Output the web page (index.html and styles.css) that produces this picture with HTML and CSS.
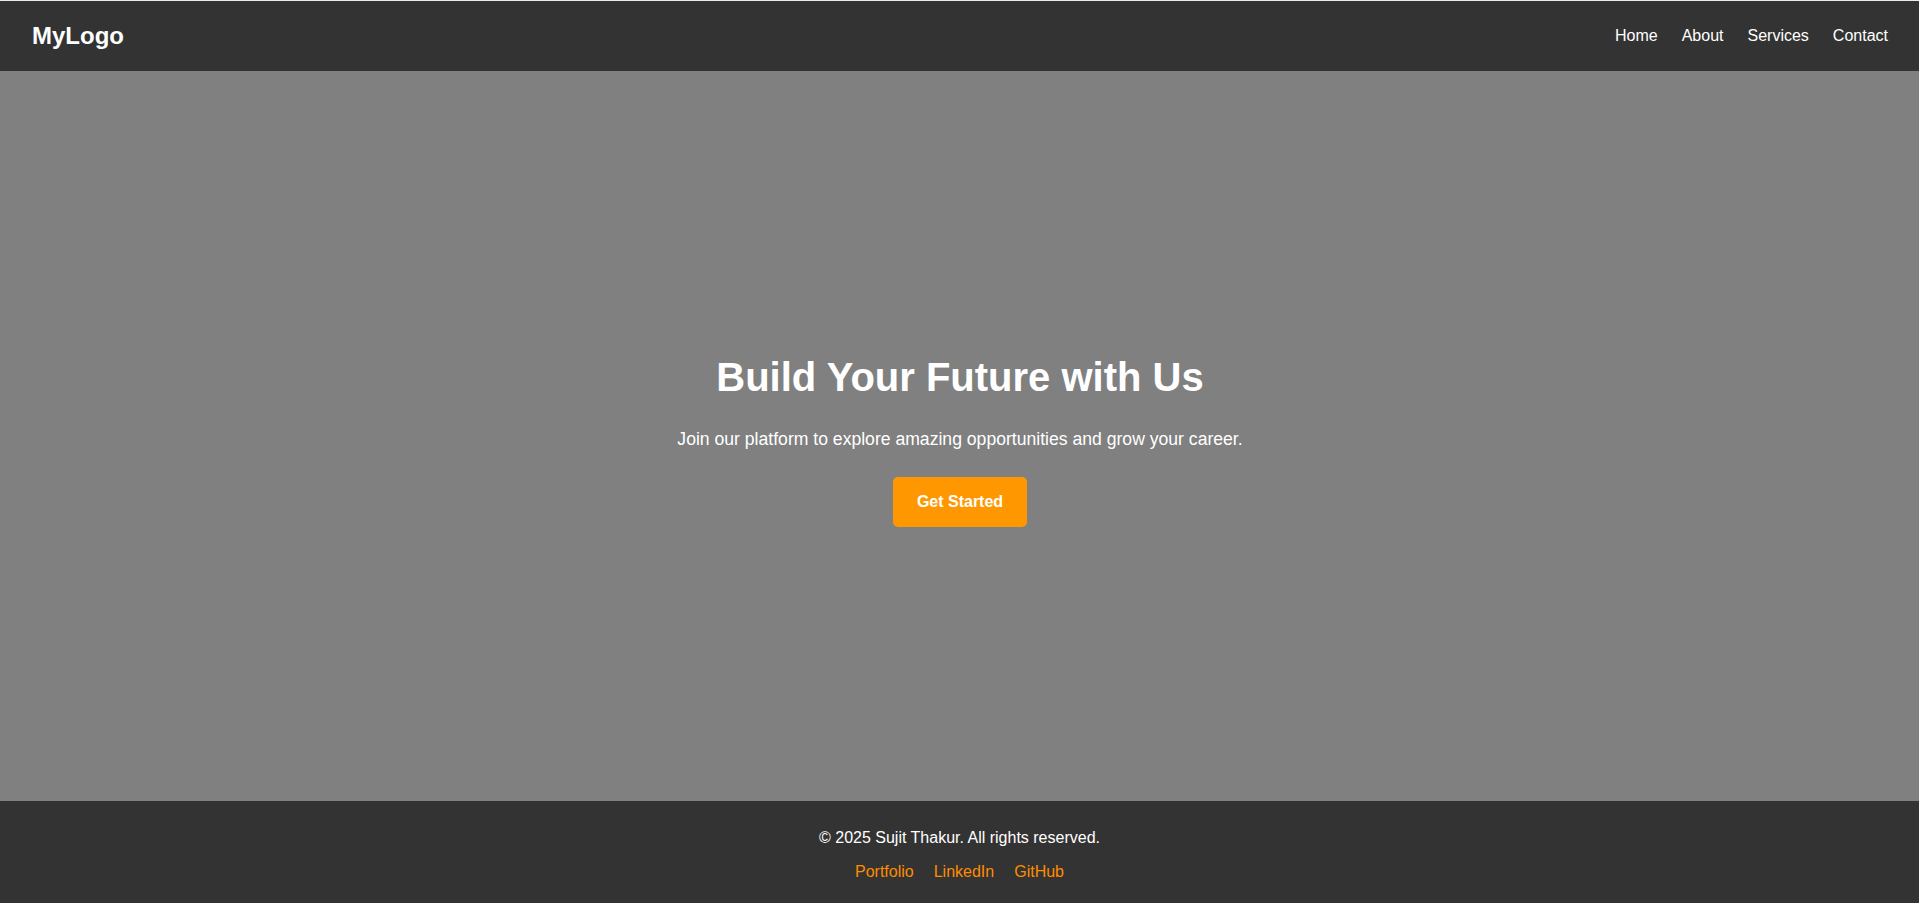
FILE: index.html
```html
<!DOCTYPE html>
<html lang="en">
<head>
<meta charset="utf-8">
<title>MyLogo</title>
<link rel="stylesheet" href="styles.css">
</head>
<body>
<div class="page">
  <header class="site-header">
    <div class="logo">MyLogo</div>
    <nav class="nav">
      <a href="#">Home</a>
      <a href="#">About</a>
      <a href="#">Services</a>
      <a href="#">Contact</a>
    </nav>
  </header>
  <main class="hero">
    <h1 class="hero-title">Build Your Future with Us</h1>
    <p class="hero-text">Join our platform to explore amazing opportunities and grow your career.</p>
    <a class="btn" href="#">Get Started</a>
  </main>
  <footer class="site-footer">
    <p class="copy">© 2025 Sujit Thakur. All rights reserved.</p>
    <div class="footer-links">
      <a href="#">Portfolio</a>
      <a href="#">LinkedIn</a>
      <a href="#">GitHub</a>
    </div>
  </footer>
</div>
</body>
</html>
```

FILE: styles.css
```css
* { box-sizing: border-box; }
html, body { margin: 0; padding: 0; }
body {
  font-family: "Liberation Sans", Arial, sans-serif;
  color: #fff;
  background: #808080;
}
.page {
  height: 903px;
  display: flex;
  flex-direction: column;
  border-top: 1px solid #ebebeb;
}
.site-header {
  height: 70px;
  flex: 0 0 70px;
  background: #333;
  display: flex;
  align-items: center;
  justify-content: space-between;
  padding: 0 31px 0 32px;
}
.logo {
  font-size: 24px;
  font-weight: bold;
  color: #fff;
}
.nav {
  display: flex;
  gap: 24px;
}
.nav a {
  color: #fff;
  text-decoration: none;
  font-size: 16px;
}
.hero {
  flex: 1;
  background: #808080;
  display: flex;
  flex-direction: column;
  align-items: center;
  justify-content: center;
  padding-top: 9px;
  padding-left: 1px;
  text-align: center;
}
.hero-title {
  font-size: 40px;
  font-weight: bold;
  margin: 0 0 29px;
  line-height: 46px;
}
.hero-text {
  font-size: 17.6px;
  margin: 0 0 28px;
  line-height: 20px;
}
.btn {
  display: inline-block;
  background: #ff9800;
  color: #fff;
  font-weight: bold;
  font-size: 16px;
  line-height: 18px;
  padding: 16px 24px;
  border-radius: 5px;
  text-decoration: none;
}
.site-footer {
  flex: 0 0 102px;
  background: #333;
  text-align: center;
  padding-top: 28px;
}
.copy {
  margin: 0 0 16px;
  font-size: 16px;
  line-height: 18px;
}
.footer-links {
  display: flex;
  justify-content: center;
  gap: 20px;
  font-size: 16px;
  line-height: 18px;
}
.footer-links a {
  color: #ff8c00;
  text-decoration: none;
}
```
